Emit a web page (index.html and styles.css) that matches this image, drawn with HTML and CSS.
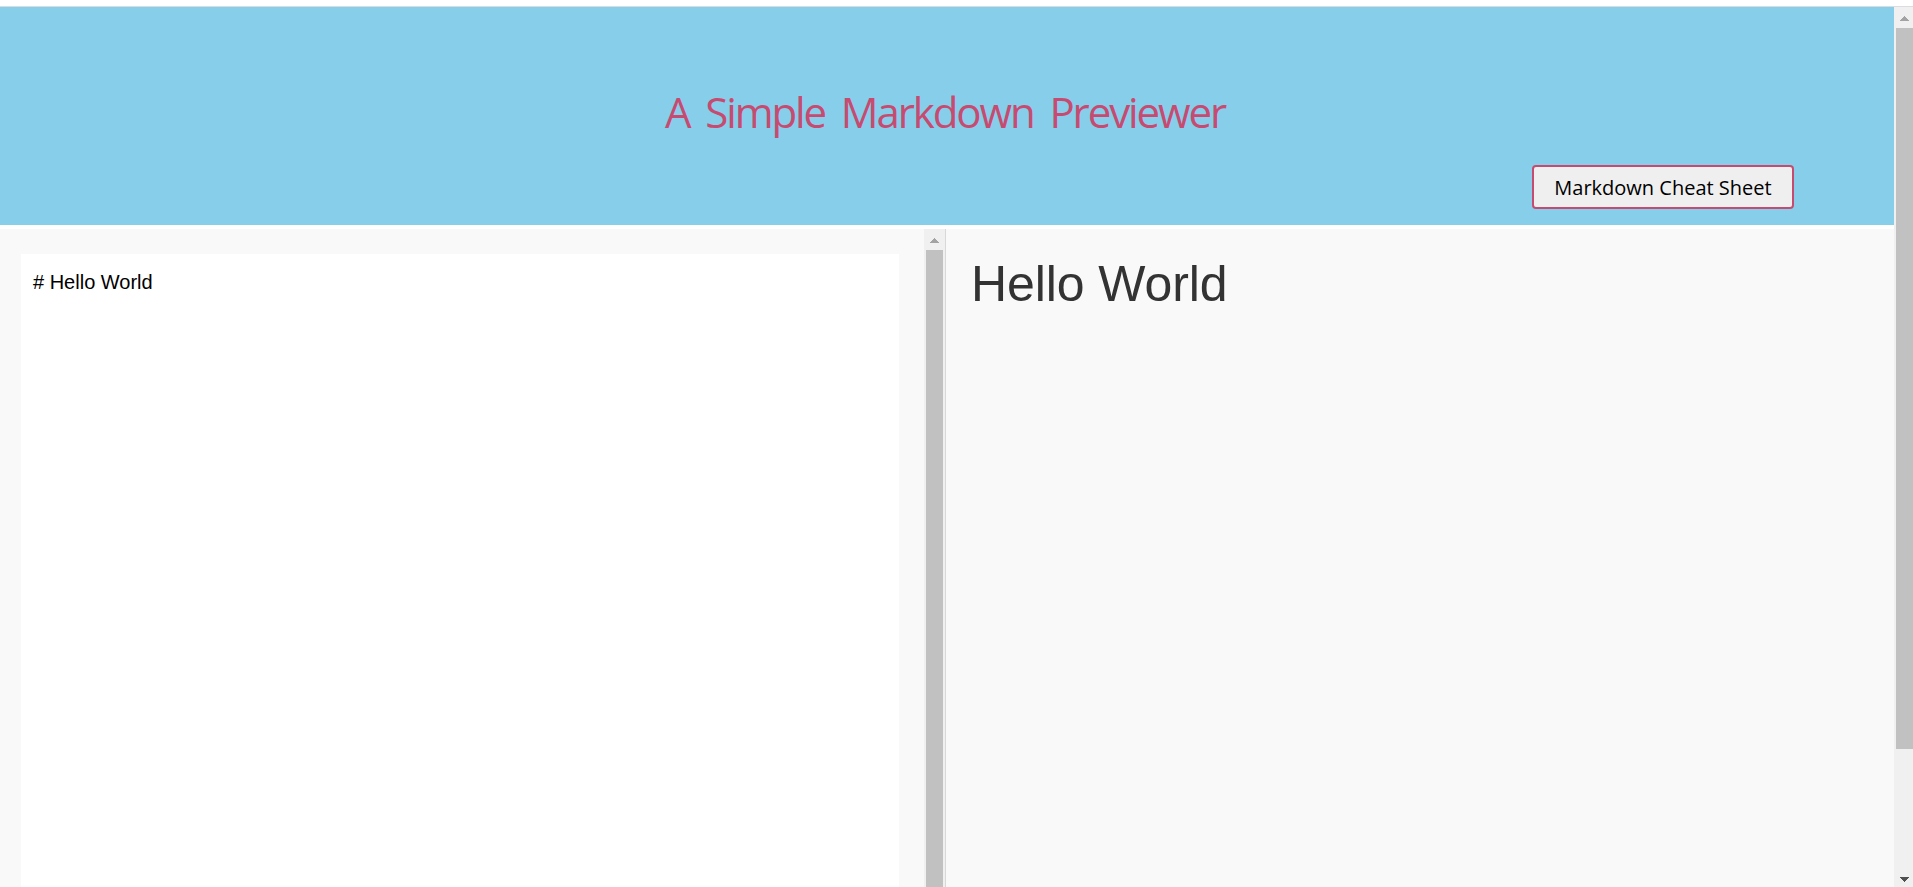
FILE: index.html
```html
<!DOCTYPE html>
<html lang="en">
<head>
<meta charset="utf-8">
<title>A Simple Markdown Previewer</title>
<link rel="stylesheet" href="styles.css">
</head>
<body>
<div class="topline"></div>
<div class="viewport">
  <div class="page">
    <header class="header">
      <h1 class="title">A Simple Markdown Previewer</h1>
      <button class="cheat">Markdown Cheat Sheet</button>
    </header>
    <main class="panes">
      <section class="editor">
        <div class="input"># Hello World</div>
        <div class="scrollbar">
          <svg class="arrow" width="9" height="5" viewBox="0 0 9 5" shape-rendering="crispEdges"><path d="M4 0h1v1h1v1h1v1h1v1h1v1H0V4h1V3h1V2h1V1h1z" fill="#a3a3a3"/></svg>
          <div class="thumb"></div>
        </div>
      </section>
      <section class="preview"><h2 class="heading">Hello World</h2></section>
    </main>
  </div>
  <div class="scrollbar scrollbar-page">
    <svg class="arrow" width="9" height="5" viewBox="0 0 9 5" shape-rendering="crispEdges"><path d="M4 0h1v1h1v1h1v1h1v1h1v1H0V4h1V3h1V2h1V1h1z" fill="#a3a3a3"/></svg>
    <div class="thumb"></div>
    <svg class="arrow-down" width="9" height="5" viewBox="0 0 9 5" shape-rendering="crispEdges"><path d="M0 0h9v1H8v1H7v1H6v1H5v1H4V4H3V3H2V2H1V1H0z" fill="#505050"/></svg>
  </div>
</div>
</body>
</html>
```
FILE: styles.css
```css
* { box-sizing: border-box; }
body {
  margin: 0;
  height: 887px;
  overflow: hidden;
  display: flex;
  flex-direction: column;
  background: #fff;
  font-family: "Liberation Sans", Arial, sans-serif;
}
.topline { height: 7px; flex: none; border-bottom: 1px solid #dadce0; }
.viewport { flex: 1; display: flex; min-height: 0; }
.page { flex: 1; display: flex; flex-direction: column; min-width: 0; }
.header {
  height: 218px;
  flex: none;
  padding: 75px 100px 0 0;
  display: flex;
  flex-direction: column;
  align-items: flex-end;
  background: #87ceeb;
}
.title {
  width: 1794px;
  margin: 0 0 23px;
  padding-left: 96px;
  height: 60px;
  text-align: center;
  white-space: nowrap;
  color: #c74b70;
  font: 400 42px/60px "Comic Sans MS", "Open Sans", sans-serif;
  letter-spacing: -2.1px;
  word-spacing: 7px;
}
.cheat {
  width: 262px;
  height: 44px;
  padding: 1px 0 0;
  border: 2px solid #c74b70;
  border-radius: 4px;
  background: #efefef;
  color: #000;
  font: 400 20px/39px "Comic Sans MS", "Open Sans", sans-serif;
  white-space: nowrap;
}
.panes { flex: 1; display: flex; min-height: 0; margin-top: 4px; }
.editor {
  width: 946px;
  flex: none;
  display: flex;
  padding-left: 21px;
  border-right: 1px solid #d8d8d8;
  background: #f9f9f9;
}
.input {
  flex: 1;
  margin: 25px 25px 0 0;
  padding: 16px 12px;
  background: #fff;
  color: #000;
  font-size: 20px;
  line-height: 24px;
}
.preview { flex: 1; padding: 27px 25px; background: #f9f9f9; }
.heading { margin: 0; font-size: 50px; line-height: 56px; font-weight: 400; letter-spacing: -0.1px; color: #333; }
.scrollbar {
  width: 21px;
  flex: none;
  padding: 9px 2px 0;
  display: flex;
  flex-direction: column;
  background: #f0f0f0;
}
.arrow { align-self: center; flex: none; margin-bottom: 7px; }
.thumb { flex: 1; background: #c1c1c1; }
.scrollbar-page { width: 19px; padding-right: 0; }
.scrollbar-page .thumb { flex: none; height: 721px; }
.arrow-down { align-self: center; margin: auto 0 5px; }
```
